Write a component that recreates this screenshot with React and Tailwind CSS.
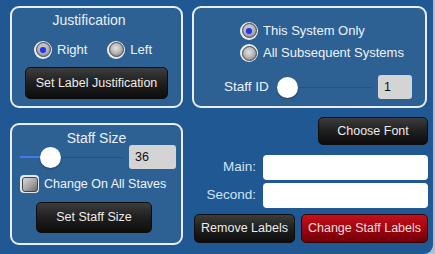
import React from "react";

const font = { fontFamily: '"Liberation Sans", Arial, sans-serif' };

function Radio({ on }) {
  return (
    <div className="w-[18px] h-[18px] rounded-full bg-[#e9eef3] p-[1.5px] shrink-0">
      <div className="w-full h-full rounded-full border border-[#444] bg-[radial-gradient(circle_at_45%_40%,#e4e4e4_0%,#b9b9b9_45%,#6f6f6f_100%)] flex items-center justify-center">
        {on && <div className="w-[6px] h-[6px] rounded-full bg-[#2437e6] shadow-[0_0_2px_#6f7dff]" />}
      </div>
    </div>
  );
}

function DarkButton({ className = "", children }) {
  return (
    <div
      className={
        "flex items-center justify-center rounded-[5px] border border-[#0c0c0c] bg-gradient-to-b from-[#3d3d3d] via-[#1f1f1f] to-[#0d0d0d] text-[#ececec] text-[12.5px] " +
        className
      }
    >
      {children}
    </div>
  );
}

function Slider({ width, thumbLeft, fill }) {
  return (
    <div className={"relative h-[24px] shrink-0 " + width}>
      <div className="absolute left-0 right-0 top-[11.5px] h-[1px] bg-[#255280]" />
      {fill && <div className={"absolute left-0 top-[11px] h-[2px] bg-[#3b7df0] " + fill} />}
      <div
        className={"absolute top-[1.5px] w-[21px] h-[21px] rounded-full bg-white shadow-[0_1px_2px_rgba(0,0,0,0.35)] " + thumbLeft}
      />
    </div>
  );
}

export default function App() {
  return (
    <div className="w-[435px] h-[254px] flex bg-[#aebfd1] overflow-hidden" style={font}>
      <div className="w-[433px] h-[254px] bg-[#1f5893] rounded-br-[9px] flex pl-[10px] pt-[6px] gap-[9px]">
        {/* left column */}
        <div className="w-[173px] flex flex-col">
          <div className="h-[102px] rounded-[9px] border-2 border-[#e8eef5] bg-[#2d6194] flex flex-col pt-[3px]">
            <div className="h-[18px] leading-[18px] text-[14px] text-[#e9eff6] text-center pr-[15px]">
              Justification
            </div>
            <div className="mt-[11.5px] ml-[22px] flex items-center h-[18px] text-[13px] text-[#eef3f8]">
              <Radio on />
              <span className="ml-[5px]">Right</span>
              <div className="ml-[20px]"><Radio /></div>
              <span className="ml-[5px]">Left</span>
            </div>
            <DarkButton className="mt-[8.5px] ml-[13px] w-[143px] h-[32px]">Set Label Justification</DarkButton>
          </div>

          <div className="mt-[15px] h-[122px] rounded-[9px] border-2 border-[#e8eef5] bg-[#2d6194] flex flex-col pt-[5px]">
            <div className="h-[16px] leading-[16px] text-[14px] text-[#e9eff6] text-center">Staff Size</div>
            <div className="mt-[-1px] ml-[8px] flex items-center h-[24px]">
              <Slider width="w-[103px]" thumbLeft="left-[20px]" fill="w-[24px]" />
              <div className="ml-[6px] w-[47px] h-[24px] rounded-[3px] bg-[#d4d4d4] text-[#111] text-[12.5px] flex items-center pl-[6px]">
                36
              </div>
            </div>
            <div className="mt-[6px] ml-[8px] flex items-center h-[18px]">
              <div className="w-[19px] h-[18px] rounded-[4px] bg-[#e3e9ef] p-[1.5px]">
                <div className="w-full h-full rounded-[3px] border border-[#444] bg-gradient-to-br from-[#d8d8d8] via-[#a9a9a9] to-[#6c6c6c]" />
              </div>
              <span className="ml-[5px] text-[12.5px] text-[#eef3f8] whitespace-nowrap">Change On All Staves</span>
            </div>
            <DarkButton className="mt-[9px] ml-[24px] w-[116px] h-[31px]">Set Staff Size</DarkButton>
          </div>
        </div>

        {/* right column */}
        <div className="w-[236px] flex flex-col">
          <div className="w-[235px] h-[102px] rounded-[9px] border-2 border-[#e8eef5] bg-[#2d6194] flex flex-col pt-[13.5px] text-[13px] text-[#eef3f8]">
            <div className="ml-[46px] flex items-center h-[18px]">
              <Radio on />
              <span className="ml-[5px] whitespace-nowrap">This System Only</span>
            </div>
            <div className="mt-[4.5px] ml-[46px] flex items-center h-[18px]">
              <Radio />
              <span className="ml-[5px] whitespace-nowrap">All Subsequent Systems</span>
            </div>
            <div className="mt-[13px] ml-[30px] flex items-center h-[24px]">
              <span className="text-[13.5px] w-[46px] whitespace-nowrap">Staff ID</span>
              <div className="ml-[7px]">
                <Slider width="w-[95px]" thumbLeft="left-0" />
              </div>
              <div className="ml-[6px] w-[34px] h-[24px] rounded-[3px] bg-[#d4d4d4] text-[#111] text-[12.5px] flex items-center pl-[6px]">
                1
              </div>
            </div>
          </div>

          <DarkButton className="mt-[9px] self-end w-[110px] h-[28px]">Choose Font</DarkButton>

          <div className="mt-[10px] flex items-center h-[25px]">
            <span className="w-[64px] text-right text-[13.5px] text-[#d2e2f2]">Main:</span>
            <div className="ml-[7px] w-[165px] h-[25px] rounded-[4px] bg-white" />
          </div>
          <div className="mt-[3px] flex items-center h-[25px]">
            <span className="w-[64px] text-right text-[13.5px] text-[#d2e2f2]">Second:</span>
            <div className="ml-[7px] w-[165px] h-[25px] rounded-[4px] bg-white" />
          </div>

          <div className="mt-[6px] ml-[2px] flex gap-[6px]">
            <DarkButton className="w-[101px] h-[29px]">Remove Labels</DarkButton>
            <div className="w-[127px] h-[29px] rounded-[5px] border border-[#3a0005] bg-gradient-to-b from-[#c5101c] via-[#a00510] to-[#6f0008] text-[#f4dede] text-[12.5px] flex items-center justify-center">
              Change Staff Labels
            </div>
          </div>
        </div>
      </div>
    </div>
  );
}
